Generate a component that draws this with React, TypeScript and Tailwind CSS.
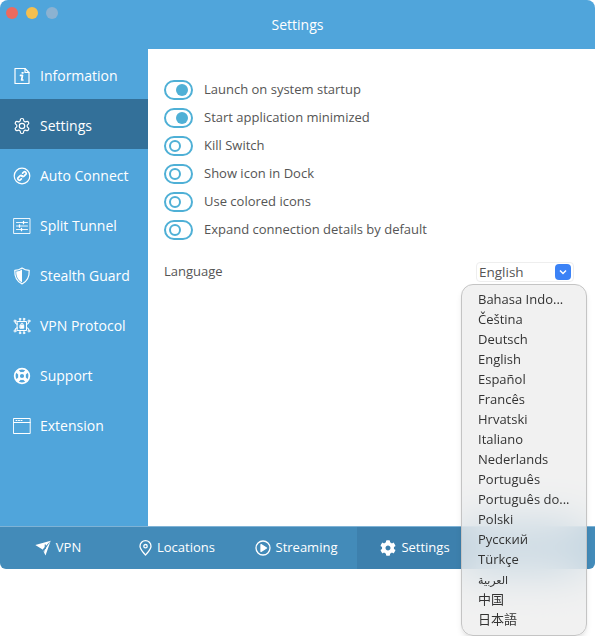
import type { ReactNode } from "react";
import { FaCog } from "react-icons/fa";

const line = {
  fill: "none",
  stroke: "currentColor",
  strokeWidth: 1.2,
  strokeLinecap: "round" as const,
  strokeLinejoin: "round" as const,
};

function InfoIcon() {
  return (
    <svg width="18" height="18" viewBox="0 0 18 18" {...line}>
      <path d="M2 1.500h10l4 4v11H2z" />
      <path d="M12 1.500v4h4" />
      <path d="M7.500 8.400h2l-.9 4.600h1.300" strokeWidth="1.700" />
      <path d="M9.200 5.800h.8" strokeWidth="1.700" />
    </svg>
  );
}

function GearIcon() {
  return (
    <svg width="18" height="18" viewBox="0 0 24 24" {...line} strokeWidth="1.600">
      <path d="M12.220 2h-.44a2 2 0 0 0-2 2v.18a2 2 0 0 1-1 1.730l-.43.25a2 2 0 0 1-2 0l-.15-.08a2 2 0 0 0-2.730.73l-.22.38a2 2 0 0 0 .73 2.730l.15.1a2 2 0 0 1 1 1.720v.51a2 2 0 0 1-1 1.740l-.15.09a2 2 0 0 0-.73 2.730l.22.38a2 2 0 0 0 2.730.73l.15-.08a2 2 0 0 1 2 0l.43.25a2 2 0 0 1 1 1.730V20a2 2 0 0 0 2 2h.44a2 2 0 0 0 2-2v-.18a2 2 0 0 1 1-1.730l.43-.25a2 2 0 0 1 2 0l.15.08a2 2 0 0 0 2.730-.73l.22-.39a2 2 0 0 0-.73-2.730l-.15-.08a2 2 0 0 1-1-1.740v-.5a2 2 0 0 1 1-1.740l.15-.09a2 2 0 0 0 .73-2.730l-.22-.38a2 2 0 0 0-2.730-.73l-.15.08a2 2 0 0 1-2 0l-.43-.25a2 2 0 0 1-1-1.730V4a2 2 0 0 0-2-2z" />
      <circle cx="12" cy="12" r="3.600" />
    </svg>
  );
}

function LinkIcon() {
  return (
    <svg width="18" height="18" viewBox="0 0 18 18" {...line}>
      <circle cx="9" cy="9" r="7.800" />
      <path d="M9.600 6.200l1.200-1.200a1.600 1.600 0 0 1 2.200 2.200l-2 2a1.600 1.600 0 0 1-2.200 0" strokeWidth="1.700" />
      <path d="M8.400 11.800l-1.200 1.200a1.600 1.600 0 0 1-2.200-2.200l2-2a1.600 1.600 0 0 1 2.200 0" strokeWidth="1.700" />
    </svg>
  );
}

function SlidersIcon() {
  return (
    <svg width="18" height="18" viewBox="0 0 18 18" {...line} strokeWidth="0.900">
      <rect x="1" y="1.500" width="16" height="15" />
      <path d="M3.500 5.500h11M3.500 9h11M3.500 12.500h11" />
      <path d="M10.500 4.300v2.400M6.500 7.800v2.400M8.500 11.300v2.400" strokeWidth="1.300" />
    </svg>
  );
}

function ShieldIcon() {
  return (
    <svg width="18" height="18" viewBox="0 0 18 18" {...line}>
      <path d="M9 1c2.100 1.500 4.400 2.300 7.200 2.400.3 6-1.700 10.900-7.200 13.600C3.500 14.300 1.500 9.400 1.800 3.400 4.600 3.300 6.900 2.500 9 1z" />
      <path d="M9 2.600v12.900C4.900 13.300 3.100 9.400 3.200 4.600 5.300 4.400 7.300 3.800 9 2.600z" fill="currentColor" stroke="none" />
    </svg>
  );
}

function ChipIcon() {
  return (
    <svg width="18" height="18" viewBox="0 0 18 18" {...line} strokeWidth="1">
      <rect x="4.500" y="4.500" width="9" height="9" />
      <rect x="7.300" y="8.200" width="3.400" height="3" fill="currentColor" />
      <path d="M7.900 8.200V7.300a1.100 1.100 0 0 1 2.200 0v.9" />
      <path d="M4.500 7H3L2.200 5.200M13.500 7H15l.8-1.800M4.500 11H3l-.8 1.800M13.500 11H15l.8 1.800M7 4.500V2.800M11 4.500V2.800M7 13.500v1.700M11 13.500v1.700" />
      <circle cx="2" cy="4" r="1" />
      <circle cx="16" cy="4" r="1" />
      <circle cx="2" cy="14" r="1" />
      <circle cx="16" cy="14" r="1" />
      <circle cx="7" cy="2" r="0.800" />
      <circle cx="11" cy="2" r="0.800" />
      <circle cx="7" cy="16" r="0.800" />
      <circle cx="11" cy="16" r="0.800" />
    </svg>
  );
}

function BuoyIcon() {
  return (
    <svg width="18" height="18" viewBox="0 0 18 18" {...line} strokeWidth="1.800">
      <circle cx="9" cy="9" r="7.300" />
      <circle cx="9" cy="9" r="3" />
      <path d="M3.800 3.800l3 3M14.200 3.800l-3 3M3.800 14.200l3-3M14.200 14.200l-3-3" strokeWidth="3.400" strokeLinecap="butt" />
    </svg>
  );
}

function WindowIcon() {
  return (
    <svg width="18" height="18" viewBox="0 0 18 18" {...line} strokeWidth="1">
      <rect x="0.800" y="1.500" width="16.400" height="15" />
      <path d="M0.800 5.500h16.400" />
      <path d="M3 3.500h1M5.500 3.500h1M8 3.500h1" />
    </svg>
  );
}

function PlaneIcon() {
  return (
    <svg width="16" height="16" viewBox="0 0 16 16">
      <path d="M0.300 5L15.700 0.800 10.500 15.500 7.600 9.500z" fill="currentColor" />
      <path d="M7.600 9.500L15.700 0.800 9.500 10.200l-.4 2.200z" fill="#438bb9" />
      <path d="M10.300 4.500v4.600" stroke="#438bb9" strokeWidth="1.200" />
    </svg>
  );
}

function PinIcon() {
  return (
    <svg width="13" height="16" viewBox="0 0 13 16" {...line} strokeWidth="1.300">
      <path d="M6.500 15C3.500 11.500 1 9.200 1 6.200a5.500 5.500 0 0 1 11 0c0 3-2.500 5.300-5.500 8.800z" />
      <circle cx="6.500" cy="6.200" r="1.700" />
    </svg>
  );
}

function PlayIcon() {
  return (
    <svg width="16" height="16" viewBox="0 0 16 16" {...line} strokeWidth="1.300">
      <circle cx="8" cy="8" r="7" />
      <path d="M6 4.600L11.500 8 6 11.400z" fill="currentColor" />
    </svg>
  );
}

const sideItems: { label: string; icon: ReactNode; active?: boolean }[] = [
  { label: "Information", icon: <InfoIcon /> },
  { label: "Settings", icon: <GearIcon />, active: true },
  { label: "Auto Connect", icon: <LinkIcon /> },
  { label: "Split Tunnel", icon: <SlidersIcon /> },
  { label: "Stealth Guard", icon: <ShieldIcon /> },
  { label: "VPN Protocol", icon: <ChipIcon /> },
  { label: "Support", icon: <BuoyIcon /> },
  { label: "Extension", icon: <WindowIcon /> },
];

const toggles = [
  { label: "Launch on system startup", on: true },
  { label: "Start application minimized", on: true },
  { label: "Kill Switch", on: false },
  { label: "Show icon in Dock", on: false },
  { label: "Use colored icons", on: false },
  { label: "Expand connection details by default", on: false },
];

const languages = [
  "Bahasa Indo...",
  "Čeština",
  "Deutsch",
  "English",
  "Español",
  "Francês",
  "Hrvatski",
  "Italiano",
  "Nederlands",
  "Português",
  "Português do...",
  "Polski",
  "Русский",
  "Türkçe",
  "العربية",
  "中国",
  "日本語",
];

const tabs: { label: string; icon: ReactNode; active?: boolean }[] = [
  { label: "VPN", icon: <PlaneIcon /> },
  { label: "Locations", icon: <PinIcon /> },
  { label: "Streaming", icon: <PlayIcon /> },
  { label: "Settings", icon: <FaCog className="text-[16px]" />, active: true },
];

function Toggle({ on }: { on: boolean }) {
  return (
    <div
      className={`flex h-5 w-[29px] items-center rounded-full border-2 border-[#4fb0d6] bg-white px-[3px] ${
        on ? "justify-end" : "justify-start"
      }`}
    >
      {on ? (
        <div className="size-3 rounded-full bg-[#4fb0d6]" />
      ) : (
        <div className="size-3 rounded-full border-2 border-[#4fb0d6]" />
      )}
    </div>
  );
}

export default function App() {
  return (
    <div className="relative h-[636px] w-[595px] overflow-hidden bg-white font-['Open_Sans',sans-serif]">
      <div className="flex h-[569px] flex-col overflow-hidden rounded-t-lg rounded-b-md">
        {/* Title bar */}
        <div className="relative flex h-[49px] shrink-0 items-center justify-center bg-[#50a5db] text-sm text-white">
          <div className="absolute top-[7px] left-[6px] flex gap-2">
            <span className="size-3 rounded-full bg-[#ec6a5e]" />
            <span className="size-3 rounded-full bg-[#f5bf4f]" />
            <span className="size-3 rounded-full bg-[#8cb2d1]" />
          </div>
          Settings
        </div>

        <div className="flex min-h-0 flex-1">
          {/* Sidebar */}
          <div className="w-[148px] shrink-0 bg-[#50a5db] text-white">
            {sideItems.map((item) => (
              <div
                key={item.label}
                className={`flex h-[50px] items-center gap-[9px] pt-[3px] pl-[13px] text-sm ${
                  item.active ? "bg-[#337099]" : ""
                }`}
              >
                {item.icon}
                <span>{item.label}</span>
              </div>
            ))}
          </div>

          {/* Content */}
          <div className="flex-1 bg-white pt-[27px] pl-[16px] text-[13px] text-[#555]">
            <div className="flex flex-col">
              {toggles.map((t) => (
                <div key={t.label} className="flex h-7 items-center gap-[11px]">
                  <Toggle on={t.on} />
                  <span>{t.label}</span>
                </div>
              ))}
            </div>
            <div className="mt-[18px] flex items-center justify-between pr-[21px]">
              <span>Language</span>
              <div className="flex h-5 w-[98px] items-center justify-between rounded border border-[#eee] px-[2px] text-[13.500px]">
                <span>English</span>
                <span className="flex size-4 items-center justify-center rounded bg-[#3b82f6]">
                  <svg width="8" height="6" viewBox="0 0 8 6" fill="none" stroke="white" strokeWidth="1.500">
                    <path d="M1 1.500l3 3 3-3" />
                  </svg>
                </span>
              </div>
            </div>
          </div>
        </div>

        {/* Bottom tabs */}
        <div className="grid h-[43px] shrink-0 grid-cols-5 border-t border-[#7fb3d6] bg-[#438bb9] text-[13px] text-white">
          {tabs.map((tab) => (
            <div
              key={tab.label}
              className={`flex items-center justify-center gap-[5px] pr-[3px] ${
                tab.active ? "bg-[#3d80ad] font-medium" : ""
              }`}
            >
              {tab.icon}
              <span>{tab.label}</span>
            </div>
          ))}
        </div>
      </div>

      {/* Language popup */}
      <div className="absolute top-[284px] left-[461px] flex h-[352px] w-[126px] flex-col rounded-xl border border-[#c4c4c4] bg-[#ececec]/75 py-[5px] pl-[16px] text-[13px] text-[#333] shadow-md backdrop-blur-xl">
        {languages.map((lang) => (
          <div
            key={lang}
            className="flex h-5 shrink-0 items-center font-['Open_Sans','Noto_Sans_CJK_SC','DejaVu_Sans',sans-serif]"
          >
            <span className={lang === "العربية" ? "text-[11px]" : ""}>{lang}</span>
          </div>
        ))}
      </div>
    </div>
  );
}
